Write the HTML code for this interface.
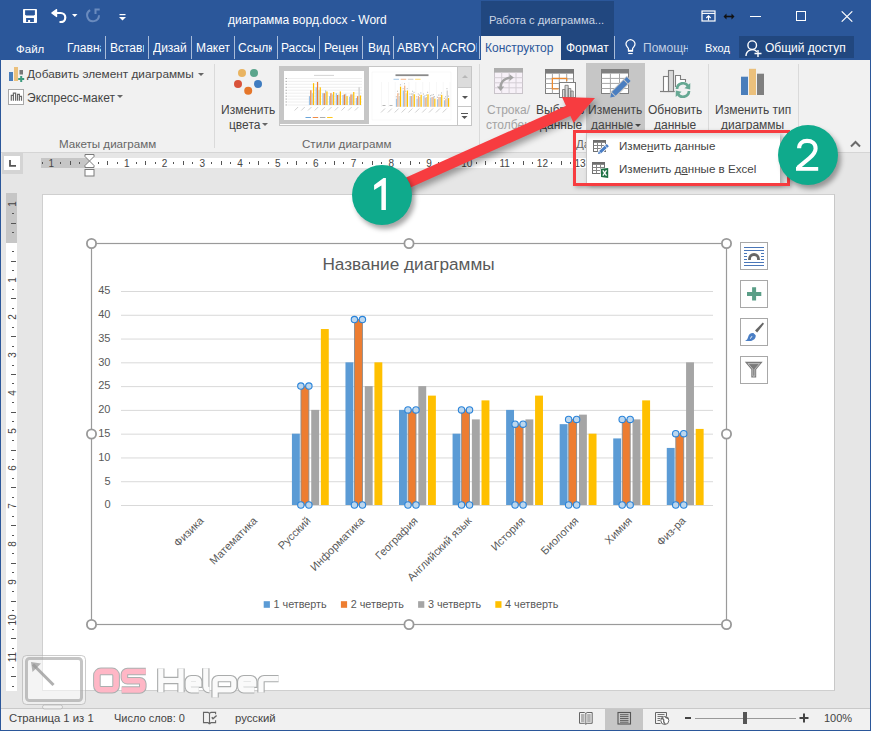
<!DOCTYPE html>
<html><head><meta charset="utf-8">
<style>
*{margin:0;padding:0;box-sizing:border-box}
html,body{width:871px;height:731px;overflow:hidden;background:#2B579A;font-family:"Liberation Sans",sans-serif}
.a{position:absolute}
.t{position:absolute;white-space:nowrap;line-height:1}
#title{left:0;top:0;width:871px;height:60px;background:#2B579A}
#ctx{left:481px;top:1px;width:133px;height:59px;background:#21477F}
#ribbon{left:1px;top:60px;width:869px;height:93px;background:#F1F1F1;border-bottom:1px solid #D5D5D5}
#doc{left:1px;top:153px;width:869px;height:555px;background:#E6E6E6}
#status{left:1px;top:708px;width:869px;height:22px;background:#F1F1F1;border-top:1px solid #C9C9C9}
.tab{position:absolute;top:41px;color:#fff;font-size:12px;overflow:hidden;height:14px;line-height:14px}
.sep{position:absolute;top:36px;width:1px;height:23px;background:#A9BCD9}
.rt{color:#444;font-size:12px}
.gl{color:#666;font-size:11.6px}
.gsep{position:absolute;top:64px;width:1px;height:84px;background:#DADADA}
</style></head><body>
<div id="title" class="a"></div>
<div id="ctx" class="a"></div>
<div id="ribbon" class="a"></div>
<div id="doc" class="a"></div>
<div id="status" class="a"></div>

<!-- title text -->
<div class="t" style="left:228px;top:14px;color:#fff;font-size:12px">диаграмма ворд.docx - Word</div>
<div class="t" style="left:489px;top:15px;color:#CBD5E4;font-size:11.2px">Работа с диаграмма...</div>

<!-- tabs -->
<div class="tab" style="left:16px;width:40px;font-size:11.5px;top:41.5px">Файл</div>
<div class="tab" style="left:67px;width:34px">Главная</div>
<div class="sep" style="left:105px"></div>
<div class="tab" style="left:110px;width:34px">Вставка</div>
<div class="sep" style="left:148px"></div>
<div class="tab" style="left:153px;width:34px">Дизайн</div>
<div class="sep" style="left:191px"></div>
<div class="tab" style="left:196px;width:34px">Макет</div>
<div class="sep" style="left:234px"></div>
<div class="tab" style="left:238px;width:34px">Ссылки</div>
<div class="sep" style="left:277px"></div>
<div class="tab" style="left:281px;width:34px">Рассылки</div>
<div class="sep" style="left:319px"></div>
<div class="tab" style="left:324px;width:34px">Рецензирование</div>
<div class="sep" style="left:362px"></div>
<div class="tab" style="left:368px;width:25px">Вид</div>
<div class="sep" style="left:393px"></div>
<div class="tab" style="left:397px;width:37px">ABBYY FineReader</div>
<div class="sep" style="left:437px"></div>
<div class="tab" style="left:441px;width:36px">ACROBAT</div>
<div class="sep" style="left:479px"></div>
<div class="a" style="left:481px;top:36px;width:80px;height:24px;background:#F1F1F1"></div>
<div class="tab" style="left:485px;width:74px;color:#2B579A">Конструктор</div>
<div class="tab" style="left:566px;width:46px">Формат</div>
<div class="sep" style="left:614px"></div>
<div class="tab" style="left:643px;width:45px;color:#C3CFE2">Помощник</div>
<div class="tab" style="left:705px;width:30px;font-size:11px">Вход</div>
<div class="a" style="left:739px;top:36px;width:115px;height:22px;background:#21477F"></div>
<div class="tab" style="left:765px;width:85px">Общий доступ</div>


<!-- quick access -->
<svg class="a" style="left:22px;top:8px" width="16" height="16" viewBox="0 0 16 16">
<rect x="1" y="1" width="14" height="14" rx="0.8" fill="#fff"/>
<path d="M3.1 2.2h9.8v4.3l-1 1H4.1l-1-1z" fill="#2B579A"/>
<path d="M4.1 10.1h7.8v3.9H8.1v-2H6.1v2h-2z" fill="#2B579A"/>
</svg>
<svg class="a" style="left:50px;top:8px" width="18" height="15" viewBox="0 0 18 15">
<path d="M2.5 5h8.2a4.6 4.6 0 0 1 0 9.2h-1.2" fill="none" stroke="#fff" stroke-width="2.2"/>
<path d="M6.6 1.5L1.8 5l4.8 3.5z" fill="#fff" stroke="#fff" stroke-width="1.2" stroke-linejoin="round"/>
</svg>
<svg class="a" style="left:72px;top:14px" width="6" height="3" viewBox="0 0 6 3"><path d="M0 0h5.5L2.75 3z" fill="#fff"/></svg>
<svg class="a" style="left:86px;top:8px" width="15" height="15" viewBox="0 0 15 15">
<path d="M4.15 2.2A5.9 5.9 0 1 0 13 7.3" fill="none" stroke="#6A8BBE" stroke-width="2"/>
<path d="M9.5 6V1.5h4.2" fill="none" stroke="#6A8BBE" stroke-width="2"/>
</svg>
<svg class="a" style="left:119px;top:14px" width="7" height="7" viewBox="0 0 7 7"><rect x="0.5" y="0" width="6" height="1.2" fill="#fff"/><path d="M0 3h7L3.5 6.5z" fill="#fff"/></svg>
<!-- window controls -->
<svg class="a" style="left:701px;top:10px" width="15" height="12" viewBox="0 0 15 12">
<rect x="1" y="1" width="13" height="10" fill="none" stroke="#fff" stroke-width="1.2"/>
<path d="M1 3.4h13" stroke="#fff" stroke-width="1.1"/>
<path d="M7.5 10.5V5.8M5.3 8l2.2-2.2 2.2 2.2" fill="none" stroke="#fff" stroke-width="1.1"/>
</svg>
<svg class="a" style="left:723px;top:13px" width="12" height="7" viewBox="0 0 12 7">
<path d="M0.5 3.5L3.5 0.5v6zM11.5 3.5L8.5 0.5v6z" fill="#111"/><rect x="3" y="2.7" width="6" height="1.6" fill="#111"/>
</svg>
<div class="a" style="left:750px;top:16px;width:11px;height:1px;background:#fff"></div>
<div class="a" style="left:796px;top:11px;width:10px;height:10px;border:1px solid #fff"></div>
<svg class="a" style="left:841px;top:11px" width="12" height="11" viewBox="0 0 12 11"><path d="M0.7 0.3L11.3 10.7M11.3 0.3L0.7 10.7" stroke="#fff" stroke-width="1.1"/></svg>
<!-- help lightbulb & person -->
<svg class="a" style="left:0;top:0" width="871" height="731" viewBox="0 0 871 731">
<path d="M628.4 50.2V48.4L627.2 46.8A4.3 4.3 0 1 1 633.8 46.8L632.6 48.4V50.2" fill="none" stroke="#fff" stroke-width="1.2"/>
<rect x="627.9" y="49.8" width="5.2" height="2" fill="#fff"/>
<rect x="628.3" y="53" width="4.4" height="1.1" fill="#fff"/>
</svg>
<svg class="a" style="left:745px;top:40px" width="18" height="17" viewBox="0 0 18 17">
<circle cx="7.2" cy="5.2" r="4.3" fill="none" stroke="#fff" stroke-width="1.4"/>
<path d="M1 16a6.3 6.3 0 0 1 11-4.2" fill="none" stroke="#fff" stroke-width="1.4"/>
<path d="M13 10v7M9.5 13.5h7" stroke="#fff" stroke-width="1.4"/>
</svg>

<!-- ribbon group 1 -->
<svg class="a" style="left:8px;top:66px" width="18" height="16" viewBox="0 0 18 16">
<rect x="1" y="6" width="4" height="9" fill="#4A7EBB"/>
<rect x="6" y="1" width="4" height="14" fill="#EBC07C"/>
<rect x="11.5" y="4" width="3.5" height="4.5" fill="#777"/>
<path d="M13.2 10v6M10.2 13h6" stroke="#3D9A7E" stroke-width="2"/>
</svg>
<div class="t rt" style="left:27px;top:69px;font-size:11.8px">Добавить элемент диаграммы</div>
<svg class="a" style="left:198px;top:73px" width="6" height="3"><path d="M0 0h6L3 3z" fill="#666"/></svg>
<svg class="a" style="left:0;top:0" width="871" height="731" viewBox="0 0 871 731">
<rect x="8.5" y="89.5" width="15" height="15" fill="#fff" stroke="#A8A8A8" stroke-width="1"/>
<path d="M11.3 100.8V95.4H13.4V93.2H15.6V100.8M13.4 95.4V100.8M17.5 100.8V94.4H19.4V96.3H21.5V100.8M19.4 96.3V100.8" fill="none" stroke="#6A6A6A" stroke-width="1.2"/>
</svg>
<div class="t rt" style="left:27px;top:92px">Экспресс-макет</div>
<svg class="a" style="left:117px;top:95px" width="6" height="3"><path d="M0 0h6L3 3z" fill="#666"/></svg>
<div class="t gl" style="left:59px;top:138px">Макеты диаграмм</div>
<div class="gsep" style="left:214px"></div>

<!-- change colors -->
<svg class="a" style="left:232px;top:67px" width="32" height="29" viewBox="0 0 32 29">
<circle cx="10" cy="5.9" r="4" fill="#E9B461"/>
<circle cx="22" cy="5.9" r="4" fill="#5BA58C"/>
<circle cx="6" cy="17" r="4" fill="#D9533A"/>
<circle cx="26" cy="17" r="4" fill="#3F7CC0"/>
<circle cx="16.2" cy="23.8" r="4" fill="#E5762A"/>
</svg>
<div class="t rt" style="left:221px;top:104px">Изменить</div>
<div class="t rt" style="left:229px;top:119px">цвета</div>
<svg class="a" style="left:262px;top:123px" width="6" height="3"><path d="M0 0h6L3 3z" fill="#666"/></svg>

<!-- gallery -->
<div class="a" style="left:279px;top:66px;width:193px;height:60px;border:1px solid #C6C6C6;background:#fff"></div>
<div class="a" style="left:280px;top:67px;width:89px;height:57px;background:#C6C6C6"></div>
<div class="a" style="left:284px;top:71px;width:80px;height:49px;background:#fff"></div>
<div class="a" style="left:457px;top:67px;width:14px;height:21px;background:#DCDCDC;border-left:1px solid #C6C6C6"></div>
<div class="a" style="left:457px;top:87px;width:14px;height:20px;border-left:1px solid #C6C6C6;border-top:1px solid #C6C6C6"></div>
<div class="a" style="left:457px;top:106px;width:14px;height:19px;border-left:1px solid #C6C6C6;border-top:1px solid #C6C6C6"></div>
<svg class="a" style="left:461.5px;top:75px" width="6" height="3"><path d="M0 3h6L3 0z" fill="#B8B8B8"/></svg>
<svg class="a" style="left:461.5px;top:96px" width="6" height="3"><path d="M0 0h6L3 3z" fill="#555"/></svg>
<svg class="a" style="left:461px;top:113px" width="7" height="7"><rect x="0" y="0" width="7" height="1" fill="#555"/><path d="M0.5 3h6L3.5 6z" fill="#555"/></svg>
<svg class="a" style="left:0;top:0" width="871" height="731" viewBox="0 0 871 731">
<line x1="288" y1="105.0" x2="362" y2="105.0" stroke="#E4E4E4" stroke-width="0.6"/>
<rect x="285.5" y="104.5" width="1.6" height="0.9" fill="#AAA"/>
<line x1="288" y1="102.0" x2="362" y2="102.0" stroke="#E4E4E4" stroke-width="0.6"/>
<rect x="285.5" y="101.5" width="1.6" height="0.9" fill="#AAA"/>
<line x1="288" y1="99.1" x2="362" y2="99.1" stroke="#E4E4E4" stroke-width="0.6"/>
<rect x="285.5" y="98.6" width="1.6" height="0.9" fill="#AAA"/>
<line x1="288" y1="96.2" x2="362" y2="96.2" stroke="#E4E4E4" stroke-width="0.6"/>
<rect x="285.5" y="95.7" width="1.6" height="0.9" fill="#AAA"/>
<line x1="288" y1="93.2" x2="362" y2="93.2" stroke="#E4E4E4" stroke-width="0.6"/>
<rect x="285.5" y="92.7" width="1.6" height="0.9" fill="#AAA"/>
<line x1="288" y1="90.2" x2="362" y2="90.2" stroke="#E4E4E4" stroke-width="0.6"/>
<rect x="285.5" y="89.8" width="1.6" height="0.9" fill="#AAA"/>
<line x1="288" y1="87.3" x2="362" y2="87.3" stroke="#E4E4E4" stroke-width="0.6"/>
<rect x="285.5" y="86.8" width="1.6" height="0.9" fill="#AAA"/>
<line x1="288" y1="84.3" x2="362" y2="84.3" stroke="#E4E4E4" stroke-width="0.6"/>
<rect x="285.5" y="83.8" width="1.6" height="0.9" fill="#AAA"/>
<line x1="288" y1="81.4" x2="362" y2="81.4" stroke="#E4E4E4" stroke-width="0.6"/>
<rect x="285.5" y="80.9" width="1.6" height="0.9" fill="#AAA"/>
<line x1="288" y1="78.5" x2="362" y2="78.5" stroke="#E4E4E4" stroke-width="0.6"/>
<rect x="285.5" y="78.0" width="1.6" height="0.9" fill="#AAA"/>
<rect x="314" y="74.9" width="20" height="0.8" fill="#C8C8C8"/>
<rect x="308.90" y="96.15" width="1.2" height="8.85" fill="#9DC3E6"/>
<rect x="310.25" y="90.25" width="1.2" height="14.75" fill="#ED7D31"/>
<rect x="311.60" y="93.20" width="1.2" height="11.80" fill="#C9C9C9"/>
<rect x="312.95" y="83.17" width="1.2" height="21.83" fill="#FFC000"/>
<rect x="315.60" y="87.30" width="1.2" height="17.70" fill="#9DC3E6"/>
<rect x="316.95" y="81.99" width="1.2" height="23.01" fill="#ED7D31"/>
<rect x="318.30" y="90.25" width="1.2" height="14.75" fill="#C9C9C9"/>
<rect x="319.65" y="87.30" width="1.2" height="17.70" fill="#FFC000"/>
<rect x="322.30" y="93.20" width="1.2" height="11.80" fill="#9DC3E6"/>
<rect x="323.65" y="93.20" width="1.2" height="11.80" fill="#ED7D31"/>
<rect x="325.00" y="90.25" width="1.2" height="14.75" fill="#C9C9C9"/>
<rect x="326.35" y="91.43" width="1.2" height="13.57" fill="#FFC000"/>
<rect x="329.00" y="96.15" width="1.2" height="8.85" fill="#9DC3E6"/>
<rect x="330.35" y="93.20" width="1.2" height="11.80" fill="#ED7D31"/>
<rect x="331.70" y="94.38" width="1.2" height="10.62" fill="#C9C9C9"/>
<rect x="333.05" y="92.02" width="1.2" height="12.98" fill="#FFC000"/>
<rect x="335.70" y="93.20" width="1.2" height="11.80" fill="#9DC3E6"/>
<rect x="337.05" y="94.97" width="1.2" height="10.03" fill="#ED7D31"/>
<rect x="338.40" y="94.38" width="1.2" height="10.62" fill="#C9C9C9"/>
<rect x="339.75" y="91.43" width="1.2" height="13.57" fill="#FFC000"/>
<rect x="342.40" y="94.97" width="1.2" height="10.03" fill="#9DC3E6"/>
<rect x="343.75" y="94.38" width="1.2" height="10.62" fill="#ED7D31"/>
<rect x="345.10" y="93.79" width="1.2" height="11.21" fill="#C9C9C9"/>
<rect x="346.45" y="96.15" width="1.2" height="8.85" fill="#FFC000"/>
<rect x="349.10" y="96.74" width="1.2" height="8.26" fill="#9DC3E6"/>
<rect x="350.45" y="94.38" width="1.2" height="10.62" fill="#ED7D31"/>
<rect x="351.80" y="94.38" width="1.2" height="10.62" fill="#C9C9C9"/>
<rect x="353.15" y="92.02" width="1.2" height="12.98" fill="#FFC000"/>
<rect x="355.80" y="97.92" width="1.2" height="7.08" fill="#9DC3E6"/>
<rect x="357.15" y="96.15" width="1.2" height="8.85" fill="#ED7D31"/>
<rect x="358.50" y="87.30" width="1.2" height="17.70" fill="#C9C9C9"/>
<rect x="359.85" y="95.56" width="1.2" height="9.44" fill="#FFC000"/>
<line x1="298.1" y1="107" x2="294.6" y2="110.5" stroke="#BBB" stroke-width="0.7"/>
<line x1="304.8" y1="107" x2="301.3" y2="110.5" stroke="#BBB" stroke-width="0.7"/>
<line x1="311.5" y1="107" x2="308.0" y2="110.5" stroke="#BBB" stroke-width="0.7"/>
<line x1="318.2" y1="107" x2="314.7" y2="110.5" stroke="#BBB" stroke-width="0.7"/>
<line x1="324.9" y1="107" x2="321.4" y2="110.5" stroke="#BBB" stroke-width="0.7"/>
<line x1="331.6" y1="107" x2="328.1" y2="110.5" stroke="#BBB" stroke-width="0.7"/>
<line x1="338.3" y1="107" x2="334.8" y2="110.5" stroke="#BBB" stroke-width="0.7"/>
<line x1="345.0" y1="107" x2="341.5" y2="110.5" stroke="#BBB" stroke-width="0.7"/>
<line x1="351.7" y1="107" x2="348.2" y2="110.5" stroke="#BBB" stroke-width="0.7"/>
<line x1="358.4" y1="107" x2="354.9" y2="110.5" stroke="#BBB" stroke-width="0.7"/>
<rect x="305.5" y="117" width="5.5" height="0.9" fill="#5B9BD5"/>
<rect x="312.7" y="117" width="5.5" height="0.9" fill="#ED7D31"/>
<rect x="319.9" y="117" width="5.5" height="0.9" fill="#A5A5A5"/>
<rect x="327.1" y="117" width="5.5" height="0.9" fill="#FFC000"/>
<rect x="372" y="72" width="79" height="48" fill="none" stroke="#F2F2F2" stroke-width="0.5"/>
<rect x="395.5" y="74.3" width="33" height="1.8" fill="#8A8A8A"/>
<rect x="393.5" y="78.8" width="5.5" height="0.9" fill="#9DC3E6"/>
<rect x="400.7" y="78.8" width="5.5" height="0.9" fill="#F4B183"/>
<rect x="407.9" y="78.8" width="5.5" height="0.9" fill="#C9C9C9"/>
<rect x="415.1" y="78.8" width="5.5" height="0.9" fill="#FFD966"/>
<line x1="381.5" y1="82" x2="381.5" y2="107" stroke="#EEE" stroke-width="0.5"/>
<line x1="388.4" y1="82" x2="388.4" y2="107" stroke="#EEE" stroke-width="0.5"/>
<line x1="395.2" y1="82" x2="395.2" y2="107" stroke="#EEE" stroke-width="0.5"/>
<line x1="402.1" y1="82" x2="402.1" y2="107" stroke="#EEE" stroke-width="0.5"/>
<line x1="408.9" y1="82" x2="408.9" y2="107" stroke="#EEE" stroke-width="0.5"/>
<line x1="415.8" y1="82" x2="415.8" y2="107" stroke="#EEE" stroke-width="0.5"/>
<line x1="422.7" y1="82" x2="422.7" y2="107" stroke="#EEE" stroke-width="0.5"/>
<line x1="429.5" y1="82" x2="429.5" y2="107" stroke="#EEE" stroke-width="0.5"/>
<line x1="436.4" y1="82" x2="436.4" y2="107" stroke="#EEE" stroke-width="0.5"/>
<line x1="443.2" y1="82" x2="443.2" y2="107" stroke="#EEE" stroke-width="0.5"/>
<line x1="450.1" y1="82" x2="450.1" y2="107" stroke="#EEE" stroke-width="0.5"/>
<rect x="382.5" y="105" width="3" height="0.7" fill="#999"/><rect x="389.5" y="105" width="3" height="0.7" fill="#999"/>
<rect x="395.90" y="98.64" width="1.2" height="8.16" fill="#9DC3E6"/>
<rect x="395.90" y="96.14" width="0.7" height="1.2" fill="#AAA"/>
<rect x="397.25" y="93.20" width="1.2" height="13.60" fill="#F4B183"/>
<rect x="397.25" y="90.70" width="0.7" height="1.2" fill="#AAA"/>
<rect x="398.60" y="95.92" width="1.2" height="10.88" fill="#C9C9C9"/>
<rect x="398.60" y="93.42" width="0.7" height="1.2" fill="#AAA"/>
<rect x="399.95" y="86.67" width="1.2" height="20.13" fill="#FFC000"/>
<rect x="399.95" y="84.17" width="0.7" height="1.2" fill="#AAA"/>
<rect x="402.76" y="90.48" width="1.2" height="16.32" fill="#9DC3E6"/>
<rect x="402.76" y="87.98" width="0.7" height="1.2" fill="#AAA"/>
<rect x="404.11" y="85.58" width="1.2" height="21.22" fill="#F4B183"/>
<rect x="404.11" y="83.08" width="0.7" height="1.2" fill="#AAA"/>
<rect x="405.46" y="93.20" width="1.2" height="13.60" fill="#C9C9C9"/>
<rect x="405.46" y="90.70" width="0.7" height="1.2" fill="#AAA"/>
<rect x="406.81" y="90.48" width="1.2" height="16.32" fill="#FFC000"/>
<rect x="406.81" y="87.98" width="0.7" height="1.2" fill="#AAA"/>
<rect x="409.62" y="95.92" width="1.2" height="10.88" fill="#9DC3E6"/>
<rect x="409.62" y="93.42" width="0.7" height="1.2" fill="#AAA"/>
<rect x="410.97" y="95.92" width="1.2" height="10.88" fill="#F4B183"/>
<rect x="410.97" y="93.42" width="0.7" height="1.2" fill="#AAA"/>
<rect x="412.32" y="93.20" width="1.2" height="13.60" fill="#C9C9C9"/>
<rect x="412.32" y="90.70" width="0.7" height="1.2" fill="#AAA"/>
<rect x="413.67" y="94.29" width="1.2" height="12.51" fill="#FFC000"/>
<rect x="413.67" y="91.79" width="0.7" height="1.2" fill="#AAA"/>
<rect x="416.48" y="98.64" width="1.2" height="8.16" fill="#9DC3E6"/>
<rect x="416.48" y="96.14" width="0.7" height="1.2" fill="#AAA"/>
<rect x="417.83" y="95.92" width="1.2" height="10.88" fill="#F4B183"/>
<rect x="417.83" y="93.42" width="0.7" height="1.2" fill="#AAA"/>
<rect x="419.18" y="97.01" width="1.2" height="9.79" fill="#C9C9C9"/>
<rect x="419.18" y="94.51" width="0.7" height="1.2" fill="#AAA"/>
<rect x="420.53" y="94.83" width="1.2" height="11.97" fill="#FFC000"/>
<rect x="420.53" y="92.33" width="0.7" height="1.2" fill="#AAA"/>
<rect x="423.34" y="95.92" width="1.2" height="10.88" fill="#9DC3E6"/>
<rect x="423.34" y="93.42" width="0.7" height="1.2" fill="#AAA"/>
<rect x="424.69" y="97.55" width="1.2" height="9.25" fill="#F4B183"/>
<rect x="424.69" y="95.05" width="0.7" height="1.2" fill="#AAA"/>
<rect x="426.04" y="97.01" width="1.2" height="9.79" fill="#C9C9C9"/>
<rect x="426.04" y="94.51" width="0.7" height="1.2" fill="#AAA"/>
<rect x="427.39" y="94.29" width="1.2" height="12.51" fill="#FFC000"/>
<rect x="427.39" y="91.79" width="0.7" height="1.2" fill="#AAA"/>
<rect x="430.20" y="97.55" width="1.2" height="9.25" fill="#9DC3E6"/>
<rect x="430.20" y="95.05" width="0.7" height="1.2" fill="#AAA"/>
<rect x="431.55" y="97.01" width="1.2" height="9.79" fill="#F4B183"/>
<rect x="431.55" y="94.51" width="0.7" height="1.2" fill="#AAA"/>
<rect x="432.90" y="96.46" width="1.2" height="10.34" fill="#C9C9C9"/>
<rect x="432.90" y="93.96" width="0.7" height="1.2" fill="#AAA"/>
<rect x="434.25" y="98.64" width="1.2" height="8.16" fill="#FFC000"/>
<rect x="434.25" y="96.14" width="0.7" height="1.2" fill="#AAA"/>
<rect x="437.06" y="99.18" width="1.2" height="7.62" fill="#9DC3E6"/>
<rect x="437.06" y="96.68" width="0.7" height="1.2" fill="#AAA"/>
<rect x="438.41" y="97.01" width="1.2" height="9.79" fill="#F4B183"/>
<rect x="438.41" y="94.51" width="0.7" height="1.2" fill="#AAA"/>
<rect x="439.76" y="97.01" width="1.2" height="9.79" fill="#C9C9C9"/>
<rect x="439.76" y="94.51" width="0.7" height="1.2" fill="#AAA"/>
<rect x="441.11" y="94.83" width="1.2" height="11.97" fill="#FFC000"/>
<rect x="441.11" y="92.33" width="0.7" height="1.2" fill="#AAA"/>
<rect x="443.92" y="100.27" width="1.2" height="6.53" fill="#9DC3E6"/>
<rect x="443.92" y="97.77" width="0.7" height="1.2" fill="#AAA"/>
<rect x="445.27" y="98.64" width="1.2" height="8.16" fill="#F4B183"/>
<rect x="445.27" y="96.14" width="0.7" height="1.2" fill="#AAA"/>
<rect x="446.62" y="90.48" width="1.2" height="16.32" fill="#C9C9C9"/>
<rect x="446.62" y="87.98" width="0.7" height="1.2" fill="#AAA"/>
<rect x="447.97" y="98.10" width="1.2" height="8.70" fill="#FFC000"/>
<rect x="447.97" y="95.60" width="0.7" height="1.2" fill="#AAA"/>
<line x1="385.0" y1="108.5" x2="381.0" y2="112.5" stroke="#BBB" stroke-width="0.7"/>
<line x1="391.9" y1="108.5" x2="387.9" y2="112.5" stroke="#BBB" stroke-width="0.7"/>
<line x1="398.7" y1="108.5" x2="394.7" y2="112.5" stroke="#BBB" stroke-width="0.7"/>
<line x1="405.6" y1="108.5" x2="401.6" y2="112.5" stroke="#BBB" stroke-width="0.7"/>
<line x1="412.4" y1="108.5" x2="408.4" y2="112.5" stroke="#BBB" stroke-width="0.7"/>
<line x1="419.3" y1="108.5" x2="415.3" y2="112.5" stroke="#BBB" stroke-width="0.7"/>
<line x1="426.2" y1="108.5" x2="422.2" y2="112.5" stroke="#BBB" stroke-width="0.7"/>
<line x1="433.0" y1="108.5" x2="429.0" y2="112.5" stroke="#BBB" stroke-width="0.7"/>
<line x1="439.9" y1="108.5" x2="435.9" y2="112.5" stroke="#BBB" stroke-width="0.7"/>
<line x1="446.7" y1="108.5" x2="442.7" y2="112.5" stroke="#BBB" stroke-width="0.7"/>
</svg>
<div class="t gl" style="left:302px;top:138px">Стили диаграмм</div>
<div class="gsep" style="left:479px"></div>


<!-- data group -->
<svg class="a" style="left:0;top:0" width="871" height="731" viewBox="0 0 871 731">
<rect x="494.5" y="68.5" width="28" height="25" fill="#F7F1F8" stroke="#C9C4CA" stroke-width="1"/>
<rect x="494" y="68" width="29" height="4.6" fill="#ADADAD"/>
<path d="M494.5 77.7H522.5M494.5 82.8H522.5M494.5 87.8H522.5M501.7 72.5V93.5M509.1 72.5V93.5M516 72.5V93.5" stroke="#D3CED4" stroke-width="1"/>
<path d="M500.6 88.5C500 83 503.5 78.5 510 77.6" fill="none" stroke="#A3A3A3" stroke-width="2.4"/>
<path d="M509.5 74.2L513.8 77.6L509.5 81z" fill="#A3A3A3"/>
<path d="M497 86.5L500.6 91L504.2 86.5z" fill="#A3A3A3"/>
</svg>
<div class="t rt" style="left:487px;top:104px;color:#A3A3A3">Строка/</div>
<div class="t rt" style="left:486px;top:119px;color:#A3A3A3">столбец</div>
<svg class="a" style="left:0;top:0" width="871" height="731" viewBox="0 0 871 731">
<rect x="545.5" y="69.5" width="28" height="24" fill="#fff" stroke="#7F7F7F" stroke-width="1"/>
<rect x="545" y="69" width="29" height="4.6" fill="#7A7A7A"/>
<path d="M545.5 78.8H573.5M545.5 83.5H573.5M545.5 88.5H573.5M552.4 73.5V93.5M559.3 73.5V93.5M566.7 73.5V93.5" stroke="#A6A6A6" stroke-width="1"/>
<path d="M566.7 81V78.3H552.4V88.8H558.5" fill="none" stroke="#EE8A2E" stroke-width="1.2"/>
<rect x="559.5" y="82.5" width="16" height="15" fill="#fff" stroke="#7F7F7F" stroke-width="1"/>
<path d="M562.5 97V89.5H565V97M565 97V85.3H568.2V97M568.2 97V88.5H570.8V97M570.8 97V91H573.2V97" fill="#D9D9D9" stroke="#7F7F7F" stroke-width="0.9"/>
</svg>
<div class="t rt" style="left:536px;top:104px">Выбрать</div>
<div class="t rt" style="left:540px;top:119px">данные</div>
<div class="a" style="left:586px;top:63px;width:59px;height:68px;background:#C6C6C6"></div>
<svg class="a" style="left:0;top:0" width="871" height="731" viewBox="0 0 871 731">
<rect x="601.5" y="69.5" width="27" height="24" fill="#fff" stroke="#7F7F7F" stroke-width="1"/>
<rect x="601" y="69" width="28" height="4.5" fill="#7F7F7F"/>
<path d="M601.5 78.4H628.5M601.5 83.4H628.5M601.5 88.5H628.5M610.4 73.5V93.5M619.5 73.5V93.5" stroke="#A6A6A6" stroke-width="1"/>
<path d="M609.73 97.97 L610.51 91.96 L626.78 75.69 L632.01 80.92 L615.74 97.19Z" fill="#C6C6C6"/>
<path d="M610.30 97.40 L611.22 92.66 L615.04 96.48ZM611.86 92.03 L623.59 80.29 L627.41 84.11 L615.67 95.84ZM624.30 79.58 L626.78 77.11 L630.59 80.92 L628.12 83.40Z" fill="#4A7EC0"/>
</svg>
<div class="t rt" style="left:588px;top:104px">Изменить</div>
<div class="t rt" style="left:591px;top:119px">данные</div>
<svg class="a" style="left:635px;top:124px" width="6" height="3"><path d="M0 0h6L3 3z" fill="#444"/></svg>
<svg class="a" style="left:0;top:0" width="871" height="731" viewBox="0 0 871 731">
<path d="M660 91.5H674.7" stroke="#7F7F7F" stroke-width="1.2"/>
<rect x="663.5" y="76.5" width="5" height="15" fill="#fff" stroke="#7F7F7F" stroke-width="1.1"/>
<rect x="668.5" y="70.5" width="5" height="21" fill="#D9D9D9" stroke="#7F7F7F" stroke-width="1.1"/>
<path d="M675.5 87V75.5H680.5V79.5H685.5V82" fill="#fff" stroke="#7F7F7F" stroke-width="1.1"/>
<circle cx="683" cy="90" r="7.4" fill="#F1F1F1"/>
<path d="M677 89A6 6 0 0 1 688.3 86.5" fill="none" stroke="#66A893" stroke-width="2.7"/>
<path d="M690.3 83L690.2 89.5L684.5 88.2z" fill="#66A893"/>
<path d="M689 91A6 6 0 0 1 677.7 93.5" fill="none" stroke="#66A893" stroke-width="2.7"/>
<path d="M675.7 97L675.8 90.5L681.5 91.8z" fill="#66A893"/>
</svg>
<div class="t rt" style="left:648px;top:104px">Обновить</div>
<div class="t rt" style="left:654px;top:119px">данные</div>
<div class="gsep" style="left:708px"></div>
<svg class="a" style="left:740px;top:68px" width="25" height="28" viewBox="0 0 25 28">
<rect x="1" y="8.7" width="7" height="18.3" fill="#4A7EBB"/>
<rect x="9" y="0.8" width="7" height="26.2" fill="#EBC07C"/>
<rect x="17" y="5.7" width="7" height="21.3" fill="#7F7F7F"/>
</svg>
<div class="t rt" style="left:715px;top:104px">Изменить тип</div>
<div class="t rt" style="left:721px;top:119px">диаграммы</div>
<div class="gsep" style="left:798px"></div>
<svg class="a" style="left:850px;top:140px" width="11" height="8" viewBox="0 0 11 8"><path d="M1 6.5L5.5 2l4.5 4.5" fill="none" stroke="#6A6A6A" stroke-width="2"/></svg>
<div class="t gl" style="left:576px;top:138px">Данные</div>


<!-- doc area -->
<div class="a" style="left:2px;top:153px;width:21px;height:21px;background:#D4D4D4"></div>
<div class="a" style="left:4px;top:156px;width:16px;height:14px;background:#fff"></div>
<svg class="a" style="left:9px;top:160px" width="7" height="7"><path d="M1 0v5.8h6" fill="none" stroke="#555" stroke-width="1.8"/></svg>
<div class="a" style="left:41px;top:158px;width:48px;height:10px;background:#C6C6C6"></div>
<div class="a" style="left:89px;top:158px;width:497px;height:10px;background:#fff"></div>
<div class="a" style="left:6px;top:193px;width:11px;height:50px;background:#C6C6C6"></div>
<div class="a" style="left:6px;top:243px;width:11px;height:448px;background:#fff"></div>
<div class="a" style="left:42px;top:194px;width:793px;height:497px;background:#fff;border:1px solid #CFCFCF;border-right-color:#C8C8C8"></div>


<div class="t" style="left:36.2px;top:159px;width:30px;text-align:center;font-size:10px;line-height:10px;color:#444">1</div>
<div class="t" style="left:111.8px;top:159px;width:30px;text-align:center;font-size:10px;line-height:10px;color:#444">1</div>
<div class="t" style="left:149.6px;top:159px;width:30px;text-align:center;font-size:10px;line-height:10px;color:#444">2</div>
<div class="t" style="left:187.3px;top:159px;width:30px;text-align:center;font-size:10px;line-height:10px;color:#444">3</div>
<div class="t" style="left:225.1px;top:159px;width:30px;text-align:center;font-size:10px;line-height:10px;color:#444">4</div>
<div class="t" style="left:262.9px;top:159px;width:30px;text-align:center;font-size:10px;line-height:10px;color:#444">5</div>
<div class="t" style="left:300.7px;top:159px;width:30px;text-align:center;font-size:10px;line-height:10px;color:#444">6</div>
<div class="t" style="left:338.5px;top:159px;width:30px;text-align:center;font-size:10px;line-height:10px;color:#444">7</div>
<div class="t" style="left:376.2px;top:159px;width:30px;text-align:center;font-size:10px;line-height:10px;color:#444">8</div>
<div class="t" style="left:414.0px;top:159px;width:30px;text-align:center;font-size:10px;line-height:10px;color:#444">9</div>
<div class="t" style="left:451.8px;top:159px;width:30px;text-align:center;font-size:10px;line-height:10px;color:#444">10</div>
<div class="t" style="left:489.6px;top:159px;width:30px;text-align:center;font-size:10px;line-height:10px;color:#444">11</div>
<div class="t" style="left:527.4px;top:159px;width:30px;text-align:center;font-size:10px;line-height:10px;color:#444">12</div>
<div class="t" style="left:565.1px;top:159px;width:30px;text-align:center;font-size:10px;line-height:10px;color:#444">13</div>
<div class="t" style="left:-2px;top:198.9px;width:30px;height:10px;text-align:center;font-size:10px;line-height:10px;color:#444;transform:rotate(-90deg)">1</div>
<div class="a" style="left:12px;top:213.4px;width:2px;height:1px;background:#555"></div>
<div class="a" style="left:11px;top:222.8px;width:5px;height:1px;background:#555"></div>
<div class="a" style="left:12px;top:232.3px;width:2px;height:1px;background:#555"></div>
<div class="a" style="left:12px;top:251.1px;width:2px;height:1px;background:#555"></div>
<div class="a" style="left:11px;top:260.6px;width:5px;height:1px;background:#555"></div>
<div class="a" style="left:12px;top:270.0px;width:2px;height:1px;background:#555"></div>
<div class="t" style="left:-2px;top:274.5px;width:30px;height:10px;text-align:center;font-size:10px;line-height:10px;color:#444;transform:rotate(-90deg)">1</div>
<div class="a" style="left:12px;top:288.9px;width:2px;height:1px;background:#555"></div>
<div class="a" style="left:11px;top:298.4px;width:5px;height:1px;background:#555"></div>
<div class="a" style="left:12px;top:307.8px;width:2px;height:1px;background:#555"></div>
<div class="t" style="left:-2px;top:312.3px;width:30px;height:10px;text-align:center;font-size:10px;line-height:10px;color:#444;transform:rotate(-90deg)">2</div>
<div class="a" style="left:12px;top:326.7px;width:2px;height:1px;background:#555"></div>
<div class="a" style="left:11px;top:336.1px;width:5px;height:1px;background:#555"></div>
<div class="a" style="left:12px;top:345.6px;width:2px;height:1px;background:#555"></div>
<div class="t" style="left:-2px;top:350.0px;width:30px;height:10px;text-align:center;font-size:10px;line-height:10px;color:#444;transform:rotate(-90deg)">3</div>
<div class="a" style="left:12px;top:364.5px;width:2px;height:1px;background:#555"></div>
<div class="a" style="left:11px;top:373.9px;width:5px;height:1px;background:#555"></div>
<div class="a" style="left:12px;top:383.4px;width:2px;height:1px;background:#555"></div>
<div class="t" style="left:-2px;top:387.8px;width:30px;height:10px;text-align:center;font-size:10px;line-height:10px;color:#444;transform:rotate(-90deg)">4</div>
<div class="a" style="left:12px;top:402.3px;width:2px;height:1px;background:#555"></div>
<div class="a" style="left:11px;top:411.7px;width:5px;height:1px;background:#555"></div>
<div class="a" style="left:12px;top:421.2px;width:2px;height:1px;background:#555"></div>
<div class="t" style="left:-2px;top:425.6px;width:30px;height:10px;text-align:center;font-size:10px;line-height:10px;color:#444;transform:rotate(-90deg)">5</div>
<div class="a" style="left:12px;top:440.0px;width:2px;height:1px;background:#555"></div>
<div class="a" style="left:11px;top:449.5px;width:5px;height:1px;background:#555"></div>
<div class="a" style="left:12px;top:458.9px;width:2px;height:1px;background:#555"></div>
<div class="t" style="left:-2px;top:463.4px;width:30px;height:10px;text-align:center;font-size:10px;line-height:10px;color:#444;transform:rotate(-90deg)">6</div>
<div class="a" style="left:12px;top:477.8px;width:2px;height:1px;background:#555"></div>
<div class="a" style="left:11px;top:487.3px;width:5px;height:1px;background:#555"></div>
<div class="a" style="left:12px;top:496.7px;width:2px;height:1px;background:#555"></div>
<div class="t" style="left:-2px;top:501.2px;width:30px;height:10px;text-align:center;font-size:10px;line-height:10px;color:#444;transform:rotate(-90deg)">7</div>
<div class="a" style="left:12px;top:515.6px;width:2px;height:1px;background:#555"></div>
<div class="a" style="left:11px;top:525.0px;width:5px;height:1px;background:#555"></div>
<div class="a" style="left:12px;top:534.5px;width:2px;height:1px;background:#555"></div>
<div class="t" style="left:-2px;top:538.9px;width:30px;height:10px;text-align:center;font-size:10px;line-height:10px;color:#444;transform:rotate(-90deg)">8</div>
<div class="a" style="left:12px;top:553.4px;width:2px;height:1px;background:#555"></div>
<div class="a" style="left:11px;top:562.8px;width:5px;height:1px;background:#555"></div>
<div class="a" style="left:12px;top:572.3px;width:2px;height:1px;background:#555"></div>
<div class="t" style="left:-2px;top:576.7px;width:30px;height:10px;text-align:center;font-size:10px;line-height:10px;color:#444;transform:rotate(-90deg)">9</div>
<div class="a" style="left:12px;top:591.2px;width:2px;height:1px;background:#555"></div>
<div class="a" style="left:11px;top:600.6px;width:5px;height:1px;background:#555"></div>
<div class="a" style="left:12px;top:610.1px;width:2px;height:1px;background:#555"></div>
<div class="t" style="left:-2px;top:614.5px;width:30px;height:10px;text-align:center;font-size:10px;line-height:10px;color:#444;transform:rotate(-90deg)">10</div>
<div class="a" style="left:12px;top:628.9px;width:2px;height:1px;background:#555"></div>
<div class="a" style="left:11px;top:638.4px;width:5px;height:1px;background:#555"></div>
<div class="a" style="left:12px;top:647.8px;width:2px;height:1px;background:#555"></div>
<div class="t" style="left:-2px;top:652.3px;width:30px;height:10px;text-align:center;font-size:10px;line-height:10px;color:#444;transform:rotate(-90deg)">11</div>
<div class="a" style="left:12px;top:666.7px;width:2px;height:1px;background:#555"></div>
<div class="a" style="left:11px;top:676.2px;width:5px;height:1px;background:#555"></div>
<div class="a" style="left:12px;top:685.6px;width:2px;height:1px;background:#555"></div>
<div class="a" style="left:42.0px;top:162px;width:1px;height:2px;background:#555"></div>
<div class="a" style="left:60.1px;top:162px;width:1px;height:2px;background:#555"></div>
<div class="a" style="left:69.5px;top:161px;width:1px;height:4px;background:#555"></div>
<div class="a" style="left:79.0px;top:162px;width:1px;height:2px;background:#555"></div>
<div class="a" style="left:97.8px;top:162px;width:1px;height:2px;background:#555"></div>
<div class="a" style="left:107.3px;top:161px;width:1px;height:4px;background:#555"></div>
<div class="a" style="left:116.7px;top:162px;width:1px;height:2px;background:#555"></div>
<div class="a" style="left:135.6px;top:162px;width:1px;height:2px;background:#555"></div>
<div class="a" style="left:145.1px;top:161px;width:1px;height:4px;background:#555"></div>
<div class="a" style="left:154.5px;top:162px;width:1px;height:2px;background:#555"></div>
<div class="a" style="left:173.4px;top:162px;width:1px;height:2px;background:#555"></div>
<div class="a" style="left:182.8px;top:161px;width:1px;height:4px;background:#555"></div>
<div class="a" style="left:192.3px;top:162px;width:1px;height:2px;background:#555"></div>
<div class="a" style="left:211.2px;top:162px;width:1px;height:2px;background:#555"></div>
<div class="a" style="left:220.6px;top:161px;width:1px;height:4px;background:#555"></div>
<div class="a" style="left:230.1px;top:162px;width:1px;height:2px;background:#555"></div>
<div class="a" style="left:249.0px;top:162px;width:1px;height:2px;background:#555"></div>
<div class="a" style="left:258.4px;top:161px;width:1px;height:4px;background:#555"></div>
<div class="a" style="left:267.9px;top:162px;width:1px;height:2px;background:#555"></div>
<div class="a" style="left:286.7px;top:162px;width:1px;height:2px;background:#555"></div>
<div class="a" style="left:296.2px;top:161px;width:1px;height:4px;background:#555"></div>
<div class="a" style="left:305.6px;top:162px;width:1px;height:2px;background:#555"></div>
<div class="a" style="left:324.5px;top:162px;width:1px;height:2px;background:#555"></div>
<div class="a" style="left:334.0px;top:161px;width:1px;height:4px;background:#555"></div>
<div class="a" style="left:343.4px;top:162px;width:1px;height:2px;background:#555"></div>
<div class="a" style="left:362.3px;top:162px;width:1px;height:2px;background:#555"></div>
<div class="a" style="left:371.8px;top:161px;width:1px;height:4px;background:#555"></div>
<div class="a" style="left:381.2px;top:162px;width:1px;height:2px;background:#555"></div>
<div class="a" style="left:400.1px;top:162px;width:1px;height:2px;background:#555"></div>
<div class="a" style="left:409.5px;top:161px;width:1px;height:4px;background:#555"></div>
<div class="a" style="left:419.0px;top:162px;width:1px;height:2px;background:#555"></div>
<div class="a" style="left:437.9px;top:162px;width:1px;height:2px;background:#555"></div>
<div class="a" style="left:447.3px;top:161px;width:1px;height:4px;background:#555"></div>
<div class="a" style="left:456.8px;top:162px;width:1px;height:2px;background:#555"></div>
<div class="a" style="left:475.6px;top:162px;width:1px;height:2px;background:#555"></div>
<div class="a" style="left:485.1px;top:161px;width:1px;height:4px;background:#555"></div>
<div class="a" style="left:494.5px;top:162px;width:1px;height:2px;background:#555"></div>
<div class="a" style="left:513.4px;top:162px;width:1px;height:2px;background:#555"></div>
<div class="a" style="left:522.9px;top:161px;width:1px;height:4px;background:#555"></div>
<div class="a" style="left:532.3px;top:162px;width:1px;height:2px;background:#555"></div>
<div class="a" style="left:551.2px;top:162px;width:1px;height:2px;background:#555"></div>
<div class="a" style="left:560.6px;top:161px;width:1px;height:4px;background:#555"></div>
<div class="a" style="left:570.1px;top:162px;width:1px;height:2px;background:#555"></div>
<svg class="a" style="left:84px;top:154px" width="11" height="23" viewBox="0 0 11 23">
<path d="M1 0.5h9v2L5.5 7 1 2.5zM5.5 7L10 11.5v2H1v-2z" fill="#fff" stroke="#7A7A7A" stroke-width="1"/>
<rect x="1" y="15.5" width="9" height="6.5" fill="#fff" stroke="#7A7A7A"/>
</svg>

<svg class="a" style="left:0;top:0" width="871" height="731" viewBox="0 0 871 731" font-family="Liberation Sans, sans-serif">
<line x1="121" y1="505.50" x2="713" y2="505.50" stroke="#D9D9D9" stroke-width="1"/>
<text x="110.5" y="509.30" text-anchor="end" font-size="11" fill="#595959" dy="-1">0</text>
<line x1="121" y1="481.72" x2="713" y2="481.72" stroke="#D9D9D9" stroke-width="1"/>
<text x="110.5" y="485.52" text-anchor="end" font-size="11" fill="#595959" dy="-1">5</text>
<line x1="121" y1="457.94" x2="713" y2="457.94" stroke="#D9D9D9" stroke-width="1"/>
<text x="110.5" y="461.74" text-anchor="end" font-size="11" fill="#595959" dy="-1">10</text>
<line x1="121" y1="434.17" x2="713" y2="434.17" stroke="#D9D9D9" stroke-width="1"/>
<text x="110.5" y="437.97" text-anchor="end" font-size="11" fill="#595959" dy="-1">15</text>
<line x1="121" y1="410.39" x2="713" y2="410.39" stroke="#D9D9D9" stroke-width="1"/>
<text x="110.5" y="414.19" text-anchor="end" font-size="11" fill="#595959" dy="-1">20</text>
<line x1="121" y1="386.61" x2="713" y2="386.61" stroke="#D9D9D9" stroke-width="1"/>
<text x="110.5" y="390.41" text-anchor="end" font-size="11" fill="#595959" dy="-1">25</text>
<line x1="121" y1="362.83" x2="713" y2="362.83" stroke="#D9D9D9" stroke-width="1"/>
<text x="110.5" y="366.63" text-anchor="end" font-size="11" fill="#595959" dy="-1">30</text>
<line x1="121" y1="339.05" x2="713" y2="339.05" stroke="#D9D9D9" stroke-width="1"/>
<text x="110.5" y="342.85" text-anchor="end" font-size="11" fill="#595959" dy="-1">35</text>
<line x1="121" y1="315.28" x2="713" y2="315.28" stroke="#D9D9D9" stroke-width="1"/>
<text x="110.5" y="319.08" text-anchor="end" font-size="11" fill="#595959" dy="-1">40</text>
<line x1="121" y1="291.50" x2="713" y2="291.50" stroke="#D9D9D9" stroke-width="1"/>
<text x="110.5" y="295.30" text-anchor="end" font-size="11" fill="#595959" dy="-1">45</text>
<rect x="291.92" y="433.67" width="7.9" height="71.33" fill="#5B9BD5"/>
<rect x="300.97" y="386.11" width="7.9" height="118.89" fill="#ED7D31" stroke="#8C8C8C" stroke-width="0.9"/>
<rect x="311.22" y="409.89" width="7.9" height="95.11" fill="#A5A5A5"/>
<rect x="320.87" y="329.04" width="7.9" height="175.96" fill="#FFC000"/>
<rect x="345.47" y="362.33" width="7.9" height="142.67" fill="#5B9BD5"/>
<rect x="354.52" y="319.53" width="7.9" height="185.47" fill="#ED7D31" stroke="#8C8C8C" stroke-width="0.9"/>
<rect x="364.77" y="386.11" width="7.9" height="118.89" fill="#A5A5A5"/>
<rect x="374.42" y="362.33" width="7.9" height="142.67" fill="#FFC000"/>
<rect x="399.02" y="409.89" width="7.9" height="95.11" fill="#5B9BD5"/>
<rect x="408.07" y="409.89" width="7.9" height="95.11" fill="#ED7D31" stroke="#8C8C8C" stroke-width="0.9"/>
<rect x="418.32" y="386.11" width="7.9" height="118.89" fill="#A5A5A5"/>
<rect x="427.97" y="395.62" width="7.9" height="109.38" fill="#FFC000"/>
<rect x="452.57" y="433.67" width="7.9" height="71.33" fill="#5B9BD5"/>
<rect x="461.62" y="409.89" width="7.9" height="95.11" fill="#ED7D31" stroke="#8C8C8C" stroke-width="0.9"/>
<rect x="471.88" y="419.40" width="7.9" height="85.60" fill="#A5A5A5"/>
<rect x="481.52" y="400.38" width="7.9" height="104.62" fill="#FFC000"/>
<rect x="506.12" y="409.89" width="7.9" height="95.11" fill="#5B9BD5"/>
<rect x="515.17" y="424.15" width="7.9" height="80.85" fill="#ED7D31" stroke="#8C8C8C" stroke-width="0.9"/>
<rect x="525.42" y="419.40" width="7.9" height="85.60" fill="#A5A5A5"/>
<rect x="535.07" y="395.62" width="7.9" height="109.38" fill="#FFC000"/>
<rect x="559.67" y="424.15" width="7.9" height="80.85" fill="#5B9BD5"/>
<rect x="568.72" y="419.40" width="7.9" height="85.60" fill="#ED7D31" stroke="#8C8C8C" stroke-width="0.9"/>
<rect x="578.97" y="414.64" width="7.9" height="90.36" fill="#A5A5A5"/>
<rect x="588.62" y="433.67" width="7.9" height="71.33" fill="#FFC000"/>
<rect x="613.23" y="438.42" width="7.9" height="66.58" fill="#5B9BD5"/>
<rect x="622.27" y="419.40" width="7.9" height="85.60" fill="#ED7D31" stroke="#8C8C8C" stroke-width="0.9"/>
<rect x="632.52" y="419.40" width="7.9" height="85.60" fill="#A5A5A5"/>
<rect x="642.18" y="400.38" width="7.9" height="104.62" fill="#FFC000"/>
<rect x="666.77" y="447.93" width="7.9" height="57.07" fill="#5B9BD5"/>
<rect x="675.82" y="433.67" width="7.9" height="71.33" fill="#ED7D31" stroke="#8C8C8C" stroke-width="0.9"/>
<rect x="686.07" y="362.33" width="7.9" height="142.67" fill="#A5A5A5"/>
<rect x="695.73" y="428.91" width="7.9" height="76.09" fill="#FFC000"/>
<circle cx="300.87" cy="386.11" r="3.2" fill="#BDD7EE" stroke="#2A84DA" stroke-width="1.1"/>
<circle cx="300.87" cy="505.00" r="3.2" fill="#BDD7EE" stroke="#2A84DA" stroke-width="1.1"/>
<circle cx="308.87" cy="386.11" r="3.2" fill="#BDD7EE" stroke="#2A84DA" stroke-width="1.1"/>
<circle cx="308.87" cy="505.00" r="3.2" fill="#BDD7EE" stroke="#2A84DA" stroke-width="1.1"/>
<circle cx="354.42" cy="319.53" r="3.2" fill="#BDD7EE" stroke="#2A84DA" stroke-width="1.1"/>
<circle cx="354.42" cy="505.00" r="3.2" fill="#BDD7EE" stroke="#2A84DA" stroke-width="1.1"/>
<circle cx="362.42" cy="319.53" r="3.2" fill="#BDD7EE" stroke="#2A84DA" stroke-width="1.1"/>
<circle cx="362.42" cy="505.00" r="3.2" fill="#BDD7EE" stroke="#2A84DA" stroke-width="1.1"/>
<circle cx="407.97" cy="409.89" r="3.2" fill="#BDD7EE" stroke="#2A84DA" stroke-width="1.1"/>
<circle cx="407.97" cy="505.00" r="3.2" fill="#BDD7EE" stroke="#2A84DA" stroke-width="1.1"/>
<circle cx="415.97" cy="409.89" r="3.2" fill="#BDD7EE" stroke="#2A84DA" stroke-width="1.1"/>
<circle cx="415.97" cy="505.00" r="3.2" fill="#BDD7EE" stroke="#2A84DA" stroke-width="1.1"/>
<circle cx="461.52" cy="409.89" r="3.2" fill="#BDD7EE" stroke="#2A84DA" stroke-width="1.1"/>
<circle cx="461.52" cy="505.00" r="3.2" fill="#BDD7EE" stroke="#2A84DA" stroke-width="1.1"/>
<circle cx="469.52" cy="409.89" r="3.2" fill="#BDD7EE" stroke="#2A84DA" stroke-width="1.1"/>
<circle cx="469.52" cy="505.00" r="3.2" fill="#BDD7EE" stroke="#2A84DA" stroke-width="1.1"/>
<circle cx="515.07" cy="424.15" r="3.2" fill="#BDD7EE" stroke="#2A84DA" stroke-width="1.1"/>
<circle cx="515.07" cy="505.00" r="3.2" fill="#BDD7EE" stroke="#2A84DA" stroke-width="1.1"/>
<circle cx="523.07" cy="424.15" r="3.2" fill="#BDD7EE" stroke="#2A84DA" stroke-width="1.1"/>
<circle cx="523.07" cy="505.00" r="3.2" fill="#BDD7EE" stroke="#2A84DA" stroke-width="1.1"/>
<circle cx="568.62" cy="419.40" r="3.2" fill="#BDD7EE" stroke="#2A84DA" stroke-width="1.1"/>
<circle cx="568.62" cy="505.00" r="3.2" fill="#BDD7EE" stroke="#2A84DA" stroke-width="1.1"/>
<circle cx="576.62" cy="419.40" r="3.2" fill="#BDD7EE" stroke="#2A84DA" stroke-width="1.1"/>
<circle cx="576.62" cy="505.00" r="3.2" fill="#BDD7EE" stroke="#2A84DA" stroke-width="1.1"/>
<circle cx="622.17" cy="419.40" r="3.2" fill="#BDD7EE" stroke="#2A84DA" stroke-width="1.1"/>
<circle cx="622.17" cy="505.00" r="3.2" fill="#BDD7EE" stroke="#2A84DA" stroke-width="1.1"/>
<circle cx="630.17" cy="419.40" r="3.2" fill="#BDD7EE" stroke="#2A84DA" stroke-width="1.1"/>
<circle cx="630.17" cy="505.00" r="3.2" fill="#BDD7EE" stroke="#2A84DA" stroke-width="1.1"/>
<circle cx="675.72" cy="433.67" r="3.2" fill="#BDD7EE" stroke="#2A84DA" stroke-width="1.1"/>
<circle cx="675.72" cy="505.00" r="3.2" fill="#BDD7EE" stroke="#2A84DA" stroke-width="1.1"/>
<circle cx="683.72" cy="433.67" r="3.2" fill="#BDD7EE" stroke="#2A84DA" stroke-width="1.1"/>
<circle cx="683.72" cy="505.00" r="3.2" fill="#BDD7EE" stroke="#2A84DA" stroke-width="1.1"/>
<text transform="translate(199.43,516.5) rotate(-45)" text-anchor="end" font-size="11" fill="#595959" dy="7">Физика</text>
<text transform="translate(252.98,516.5) rotate(-45)" text-anchor="end" font-size="11" fill="#595959" dy="7">Математика</text>
<text transform="translate(306.52,516.5) rotate(-45)" text-anchor="end" font-size="11" fill="#595959" dy="7">Русский</text>
<text transform="translate(360.07,516.5) rotate(-45)" text-anchor="end" font-size="11" fill="#595959" dy="7">Информатика</text>
<text transform="translate(413.62,516.5) rotate(-45)" text-anchor="end" font-size="11" fill="#595959" dy="7">География</text>
<text transform="translate(467.18,516.5) rotate(-45)" text-anchor="end" font-size="11" fill="#595959" dy="7">Английский язык</text>
<text transform="translate(520.72,516.5) rotate(-45)" text-anchor="end" font-size="11" fill="#595959" dy="7">История</text>
<text transform="translate(574.27,516.5) rotate(-45)" text-anchor="end" font-size="11" fill="#595959" dy="7">Биология</text>
<text transform="translate(627.82,516.5) rotate(-45)" text-anchor="end" font-size="11" fill="#595959" dy="7">Химия</text>
<text transform="translate(681.37,516.5) rotate(-45)" text-anchor="end" font-size="11" fill="#595959" dy="7">Физ-ра</text>
<text x="408.5" y="269.5" text-anchor="middle" font-size="17.2" fill="#595959">Название диаграммы</text>
<rect x="263.7" y="601.2" width="6.2" height="6.6" fill="#5B9BD5"/>
<text x="273.5" y="607.5" font-size="10.8" fill="#595959">1 четверть</text>
<rect x="340.9" y="601.2" width="6.2" height="6.6" fill="#ED7D31"/>
<text x="350.7" y="607.5" font-size="10.8" fill="#595959">2 четверть</text>
<rect x="418.1" y="601.2" width="6.2" height="6.6" fill="#A5A5A5"/>
<text x="427.9" y="607.5" font-size="10.8" fill="#595959">3 четверть</text>
<rect x="495.3" y="601.2" width="6.2" height="6.6" fill="#FFC000"/>
<text x="505.1" y="607.5" font-size="10.8" fill="#595959">4 четверть</text>
<rect x="91.5" y="243.5" width="635" height="381" fill="none" stroke="#9A9A9A" stroke-width="1.2"/>
<circle cx="91.5" cy="243.5" r="4.6" fill="#fff" stroke="#999" stroke-width="1.8"/>
<circle cx="409" cy="243.5" r="4.6" fill="#fff" stroke="#999" stroke-width="1.8"/>
<circle cx="726.5" cy="243.5" r="4.6" fill="#fff" stroke="#999" stroke-width="1.8"/>
<circle cx="91.5" cy="434" r="4.6" fill="#fff" stroke="#999" stroke-width="1.8"/>
<circle cx="726.5" cy="434" r="4.6" fill="#fff" stroke="#999" stroke-width="1.8"/>
<circle cx="91.5" cy="624.5" r="4.6" fill="#fff" stroke="#999" stroke-width="1.8"/>
<circle cx="409" cy="624.5" r="4.6" fill="#fff" stroke="#999" stroke-width="1.8"/>
<circle cx="726.5" cy="624.5" r="4.6" fill="#fff" stroke="#999" stroke-width="1.8"/>
</svg>

<div class="a" style="left:740px;top:242px;width:28px;height:28px;background:#fff;border:1px solid #A8A8A8"></div>
<div class="a" style="left:740px;top:280px;width:28px;height:28px;background:#fff;border:1px solid #A8A8A8"></div>
<div class="a" style="left:740px;top:318px;width:28px;height:28px;background:#fff;border:1px solid #A8A8A8"></div>
<div class="a" style="left:740px;top:356px;width:28px;height:28px;background:#fff;border:1px solid #A8A8A8"></div>
<svg class="a" style="left:0;top:0" width="871" height="731" viewBox="0 0 871 731">
<path d="M744 247.5H764M744 250.5H764M744 253.5H747M761 253.5H764M744 256.5H747M761 256.5H764M744 259.5H747M761 259.5H764M744 262.5H764M744 265.5H764" stroke="#4A76B8" stroke-width="1"/>
<path d="M749.5 260V259A4.5 4.5 0 0 1 758.5 259V260" fill="none" stroke="#666" stroke-width="2.8"/>
<path d="M754.1 287.2V300.6M747 293.9H761.3" stroke="#5A9E87" stroke-width="4"/>
<path d="M755 330.5L762.8 322.5L764 323.8L757.2 332.4z" fill="#666"/>
<path d="M745 341c1.8-0.6 2.6-2 3.2-4.2 0.6-2.4 2.6-4.1 5.2-3.7l2.3 2.2c0.3 2.8-1.6 5-4.6 5.6z" fill="#4A7EC5"/>
<path d="M750 338.5c1-0.4 1.6-1.2 1.9-2.3" stroke="#fff" stroke-width="0.9" fill="none"/>
<path d="M744.8 361.8H762.7L756.2 369.6V377.6H751.3V369.6z" fill="#7A7A7A"/>
<path d="M748 363.6H759.6L754.8 369.2V376.2H752.8V369.2z" fill="none" stroke="#fff" stroke-width="0.9" opacity="0.55"/>
</svg>
<!-- status bar -->
<div class="t" style="left:9px;top:713px;font-size:11.3px;color:#444">Страница 1 из 1</div>
<div class="t" style="left:114px;top:713px;font-size:11px;color:#444">Число слов: 0</div>
<svg class="a" style="left:0;top:0" width="871" height="731" viewBox="0 0 871 731">
<path d="M209.5 713.2L208 712.4H203.5V722.6H208L209.5 724M209.5 713.2L211 712.4H215.6V714.3M215.6 720.2V722.6H211L209.5 724M209.5 713.2V724" fill="none" stroke="#666" stroke-width="1.1"/>
<path d="M211.8 717.3L213 718.8L216.6 715.5" fill="none" stroke="#666" stroke-width="1.4"/>
</svg>
<div class="t" style="left:235px;top:713px;font-size:11.3px;color:#444">русский</div>
<div class="a" style="left:605px;top:709px;width:38px;height:21px;background:#C6C6C6"></div>
<svg class="a" style="left:0;top:0" width="871" height="731" viewBox="0 0 871 731">
<path d="M579.5 712.5H584.5L585.8 713.5L587.1 712.5H592.2V723.3H587.1L585.8 724.3L584.5 723.3H579.5Z" fill="none" stroke="#666" stroke-width="1"/>
<path d="M585.8 713.5V724M581 715H584.5M581 717H584.5M581 719H584.5M581 721H584.5M587.2 715H590.7M587.2 717H590.7M587.2 719H590.7M587.2 721H590.7" stroke="#666" stroke-width="0.9"/>
<rect x="618" y="712.5" width="12.5" height="11.5" fill="none" stroke="#555" stroke-width="1.1"/>
<path d="M620 714.7H628.5M620 716.6H628.5M620 718.5H628.5M620 720.4H628.5M620 722.2H628.5" stroke="#555" stroke-width="0.9"/>
<path d="M666.5 716.5V712.5H655.5V723.5H660.5" fill="none" stroke="#666" stroke-width="1"/>
<path d="M657.5 714.5H664.5M657.5 716.5H663M657.5 718.5H660.5M657.5 720.5H660" stroke="#666" stroke-width="0.9"/>
<circle cx="664.8" cy="720.5" r="4" fill="#fff" stroke="#666" stroke-width="1"/>
<path d="M662 718.5c1.5 0.3 2 1.3 1.7 2.6 -0.3 1.2 0.8 1.6 1.5 2.9M665.5 717c0.8 1 2.2 1 3 1.6" fill="none" stroke="#666" stroke-width="1.3"/>
</svg>
<div class="a" style="left:685px;top:717px;width:6px;height:2px;background:#444"></div>
<div class="a" style="left:695px;top:718px;width:101px;height:1px;background:#999"></div>
<div class="a" style="left:743px;top:712px;width:4px;height:12px;background:#555"></div>
<svg class="a" style="left:799px;top:713px" width="10" height="10"><path d="M5 0.5v9M0.5 5h9" stroke="#444" stroke-width="2"/></svg>
<div class="t" style="left:824px;top:713px;font-size:11px;color:#444">100%</div>


<!-- dropdown menu -->
<div class="a" style="left:586px;top:131px;width:194px;height:52px;background:linear-gradient(#D4D4D4,#fff 9px);border-left:1px solid #C6C6C6;box-shadow:3px 3px 5px rgba(0,0,0,0.28)"></div>
<svg class="a" style="left:0;top:0" width="871" height="731" viewBox="0 0 871 731">
<rect x="593.5" y="140.5" width="12" height="11" fill="#fff" stroke="#707070" stroke-width="1"/>
<rect x="593" y="140" width="13" height="2.8" fill="#6E6E6E"/>
<path d="M597.5 143V151.5M601.5 143V151.5M593.5 145.5H605.5M593.5 148.5H605.5" stroke="#858585" stroke-width="1"/>
<path d="M597.56 154.40 L598.16 150.75 L606.81 142.89 L609.91 146.29 L601.25 154.16Z" fill="#fff"/>
<path d="M598.00 154.00 L598.69 151.34 L600.71 153.56ZM599.14 150.94 L604.76 145.83 L606.78 148.05 L601.15 153.16ZM605.21 145.43 L606.83 143.95 L608.85 146.17 L607.22 147.65Z" fill="#4A7EC5"/>
</svg>
<div class="t" style="left:619px;top:139.5px;font-size:11.6px;color:#444">Изме<u>н</u>ить данные</div>
<svg class="a" style="left:0;top:0" width="871" height="731" viewBox="0 0 871 731">
<rect x="592.5" y="162.5" width="12" height="11" fill="#fff" stroke="#707070" stroke-width="1"/>
<rect x="592" y="162" width="13" height="2.8" fill="#6E6E6E"/>
<path d="M596.5 165V173.5M600.5 165V173.5M592.5 167.5H604.5M592.5 170.5H604.5" stroke="#858585" stroke-width="1"/>
<path d="M600.3 168.6L608.3 167.8V178L600.3 177.2z" fill="#fff"/>
<path d="M601 168.7L608.2 167.9V177.9L601 177.1z" fill="#1E7145"/>
<path d="M602.8 170.3L606.5 175.6M606.5 170.3L602.8 175.6" stroke="#fff" stroke-width="1.3"/>
</svg>
<div class="t" style="left:619px;top:163px;font-size:11.6px;color:#444">Изменить д<u>а</u>нные в Excel</div>
<!-- red rectangle -->
<div class="a" style="left:573px;top:130px;width:217px;height:56px;border:3.4px solid #F73C40;box-shadow:2px 2px 4px rgba(0,0,0,0.25)"></div>
<!-- arrow -->
<svg class="a" style="left:0;top:0;filter:drop-shadow(3px 4px 3px rgba(0,0,0,0.35))" width="871" height="731" viewBox="0 0 871 731">
<line x1="381.5" y1="194.5" x2="569" y2="110.5" stroke="#F73C40" stroke-width="11"/>
<path d="M595 98L562 97L573.5 123z" fill="#F73C40"/>
</svg>
<!-- circles -->
<div class="a" style="left:351.5px;top:164.5px;width:60px;height:60px;border-radius:50%;background:#0FAA8C;box-shadow:3px 4px 5px rgba(0,0,0,0.35)"></div>

<div class="a" style="left:777.5px;top:124.8px;width:60px;height:60px;border-radius:50%;background:#0FAA8C;box-shadow:3px 4px 5px rgba(0,0,0,0.35)"></div>
<svg class="a" style="left:0;top:0" width="871" height="731" viewBox="0 0 871 731">
<path d="M383.5 178H385.9V210H381.4V185.6L374.1 190V185z" fill="#fff"/>
<path d="M799.1 148.3C799.1 143.2 802.6 140.9 807 140.9C812 140.9 815.6 143.7 815.6 148.4C815.6 152.4 813.1 155 809.3 158.2L797.8 167.8" stroke="#fff" stroke-width="4.1" fill="none"/>
<rect x="796" y="167" width="22.2" height="3.8" fill="#fff"/>
</svg>


<!-- watermark -->
<svg class="a" style="left:0;top:0" width="871" height="731" viewBox="0 0 871 731">
<rect x="22.5" y="655.5" width="63" height="49" rx="4" fill="rgba(255,255,255,0.35)" stroke="rgba(170,170,170,0.6)" stroke-width="1"/>
<rect x="26.5" y="658.5" width="55" height="42" rx="3" fill="rgba(255,255,255,0.3)" stroke="rgba(150,150,150,0.55)" stroke-width="3"/>
<rect x="42.5" y="705" width="20" height="4" rx="2" fill="rgba(255,255,255,0.4)" stroke="rgba(170,170,170,0.6)" stroke-width="1"/>
<path d="M33 664.5L53.5 685" stroke="rgba(150,150,150,0.75)" stroke-width="3"/>
<path d="M31 662l10 1.5-8.5 8.5z" fill="rgba(150,150,150,0.7)"/>
<path d="M100.9 671.4H112.1A4 4 0 0 1 116.1 675.4V685.7A4 4 0 0 1 112.1 689.7H100.9A4 4 0 0 1 96.9 685.7V675.4A4 4 0 0 1 100.9 671.4Z" fill="none" stroke="rgba(165,172,172,0.95)" stroke-width="7.6"/>
<path d="M145.8 671.5H127.4a3 3 0 0 0-3 3V677.8a3 3 0 0 0 3 3H139.8a3 3 0 0 1 3 3V687a3 3 0 0 1-3 3H121.7" fill="none" stroke="rgba(165,172,172,0.95)" stroke-width="7.6"/>
<path d="M160.8 668.5V692.2M181 668.5V692.2M160.8 680.5H181" fill="none" stroke="rgba(165,168,168,0.95)" stroke-width="7.4"/>
<path d="M198.8 689.8H191.2a3 3 0 0 1-3-3V681.6a3 3 0 0 1 3-3H195.8a3 3 0 0 1 3 3V684.2H188.2" fill="none" stroke="rgba(165,168,168,0.95)" stroke-width="7.4"/>
<path d="M205.8 668.3V686.6a3 3 0 0 0 3 3H209.5" fill="none" stroke="rgba(165,168,168,0.95)" stroke-width="7.4"/>
<path d="M215.1 697.5V681.6a3 3 0 0 1 3-3H230.8a3 3 0 0 1 3 3V686.8a3 3 0 0 1-3 3H215.1" fill="none" stroke="rgba(165,168,168,0.95)" stroke-width="7.4"/>
<path d="M254.3 689.8H243.7a3 3 0 0 1-3-3V681.6a3 3 0 0 1 3-3H250.8a3 3 0 0 1 3 3V684.2H240.7" fill="none" stroke="rgba(165,168,168,0.95)" stroke-width="7.4"/>
<path d="M261 692.4V681.6a3 3 0 0 1 3-3H278.6" fill="none" stroke="rgba(165,168,168,0.95)" stroke-width="7.4"/>
<path d="M100.9 671.4H112.1A4 4 0 0 1 116.1 675.4V685.7A4 4 0 0 1 112.1 689.7H100.9A4 4 0 0 1 96.9 685.7V675.4A4 4 0 0 1 100.9 671.4Z" fill="none" stroke="#FFB7C6" stroke-width="5.6"/>
<path d="M145.8 671.5H127.4a3 3 0 0 0-3 3V677.8a3 3 0 0 0 3 3H139.8a3 3 0 0 1 3 3V687a3 3 0 0 1-3 3H121.7" fill="none" stroke="#FFB7C6" stroke-width="5.6"/>
<path d="M160.8 668.5V692.2M181 668.5V692.2M160.8 680.5H181" fill="none" stroke="#FAFAFA" stroke-width="5.2"/>
<path d="M198.8 689.8H191.2a3 3 0 0 1-3-3V681.6a3 3 0 0 1 3-3H195.8a3 3 0 0 1 3 3V684.2H188.2" fill="none" stroke="#FAFAFA" stroke-width="5.2"/>
<path d="M205.8 668.3V686.6a3 3 0 0 0 3 3H209.5" fill="none" stroke="#FAFAFA" stroke-width="5.2"/>
<path d="M215.1 697.5V681.6a3 3 0 0 1 3-3H230.8a3 3 0 0 1 3 3V686.8a3 3 0 0 1-3 3H215.1" fill="none" stroke="#FAFAFA" stroke-width="5.2"/>
<path d="M254.3 689.8H243.7a3 3 0 0 1-3-3V681.6a3 3 0 0 1 3-3H250.8a3 3 0 0 1 3 3V684.2H240.7" fill="none" stroke="#FAFAFA" stroke-width="5.2"/>
<path d="M261 692.4V681.6a3 3 0 0 1 3-3H278.6" fill="none" stroke="#FAFAFA" stroke-width="5.2"/>
</svg>

</body></html>
